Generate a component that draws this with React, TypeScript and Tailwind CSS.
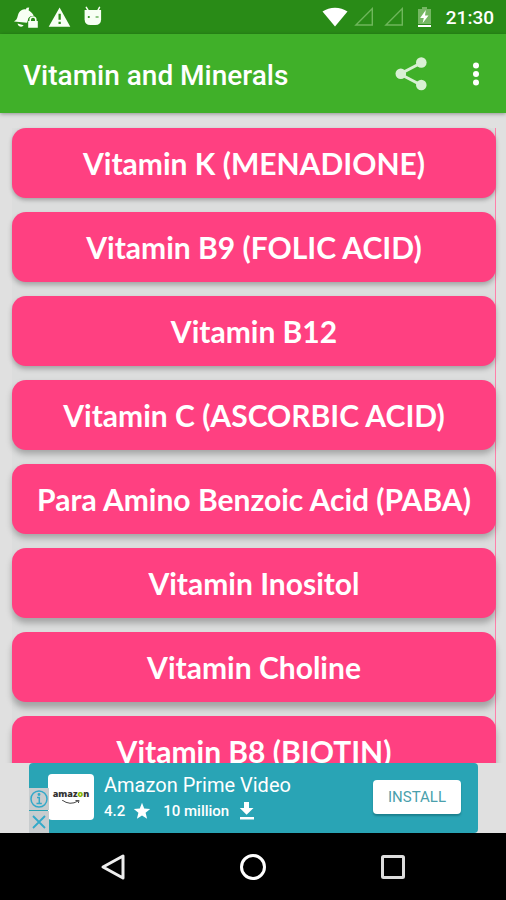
const vitamins = [
  { name: "Vitamin K (MENADIONE)", shadow: "shadow-[0_2px_4px_rgba(0,0,0,0.28)]" },
  { name: "Vitamin B9 (FOLIC ACID)", shadow: "shadow-[0_3px_5px_rgba(0,0,0,0.26)]" },
  { name: "Vitamin B12", shadow: "shadow-[0_3px_5px_rgba(0,0,0,0.26)]" },
  { name: "Vitamin C (ASCORBIC ACID)", shadow: "shadow-[0_4px_6px_rgba(0,0,0,0.26)]" },
  { name: "Para Amino Benzoic Acid (PABA)", shadow: "shadow-[0_4px_6px_rgba(0,0,0,0.26)]" },
  { name: "Vitamin Inositol", shadow: "shadow-[0_5px_6px_rgba(0,0,0,0.26)]" },
  { name: "Vitamin Choline", shadow: "shadow-[0_6px_6px_rgba(0,0,0,0.26)]" },
  { name: "Vitamin B8 (BIOTIN)", shadow: "shadow-[0_6px_6px_rgba(0,0,0,0.26)]" },
];

function SignalIcon() {
  return (
    <svg className="h-5 w-5" viewBox="0 0 20 20" fill="none" stroke="#6fb75c" strokeWidth="1.4">
      <path d="M18.300 1.600V18H1.900z" />
    </svg>
  );
}

function StatusBar() {
  return (
    <div className="flex h-[34px] shrink-0 items-center justify-between bg-[#298b17] pr-3 pl-3.5 text-white">
      <div className="flex items-center gap-2.5">
        <svg className="h-6 w-6" viewBox="0 0 24 24" fill="#f7fff4">
          <path d="M0 16.5 2.2 14.8C4.2 12.5 3.2 8 7.4 5.3 9 4.2 10.5 4.1 11.6 4.4L12.8 2.7 15.2 2.4 14.6 5.3C17.4 7.2 19.6 9.3 19.7 11.2 17 10.4 13.9 12 13.8 15.5L13 17.800z" />
          <path d="M3.5 18.5 9.6 20.3C8.5 22.6 4.3 22.2 3.5 18.5z" />
          <path d="M14.2 16h1.2v-1.2a3.6 3.6 0 0 1 7.2 0V16h1.2v6.7h-9.6zM17 16h4v-1.2a2 2 0 0 0-4 0z" fillRule="evenodd" />
        </svg>
        <svg className="h-6 w-6" viewBox="0 0 24 24" fill="#f7fff4">
          <path d="M11.6 2.5 22.3 21.8H.7zM10.5 8.7v6.1h2.3V8.7zm0 8v2.3h2.3v-2.3z" fillRule="evenodd" />
        </svg>
        <svg className="h-6 w-6" viewBox="0 0 24 24">
          <path d="M4.300 2.400 6.400 5.900M17.500 2.400 15.700 5.900" stroke="#f7fff4" strokeWidth="1.500" strokeLinecap="round" />
          <path d="M2.600 5h16.500v9.200q0 5.800-5.800 5.800H8.400q-5.800 0-5.800-5.800z" fill="#f7fff4" />
          <circle cx="6.800" cy="12" r="1.100" fill="#298b17" />
          <path d="M13.600 12h3" stroke="#298b17" strokeWidth="1" />
        </svg>
      </div>

      <div className="flex items-center">
        <svg className="mr-1.5 h-5 w-[26px]" viewBox="0 0 26 20" fill="#ffffff">
          <path d="M.5 4.500C7.500-.6 18.500-.6 25.500 4.500L13 19.500z" />
        </svg>
        <SignalIcon />
        <span className="w-2.5" />
        <SignalIcon />
        <svg className="mr-3 ml-2.5 h-[22px] w-5" viewBox="0 0 20 22">
          <path d="M4 3h4V1h5v2h4v15H4z" fill="#75b763" />
          <path d="M11.800 4 6.200 12h3.600L8.600 17.300 14.500 9.500H11z" fill="#ffffff" />
          <path d="M4 19h13v2H4z" fill="#ffffff" />
        </svg>
        <span className="pt-0.5 text-[19px] leading-6 font-medium">21:30</span>
      </div>
    </div>
  );
}

function AppBar() {
  return (
    <header className="z-10 flex h-[79px] shrink-0 items-center justify-between bg-[#40b029] pr-4 pl-[23px] text-white shadow-[0_1px_4px_rgba(0,0,0,0.35)]">
      <h1 className="pt-1 text-[28px] leading-8 font-medium">Vitamin and Minerals</h1>

      <div className="flex items-center gap-8">
        <button type="button" aria-label="Share">
          <svg className="h-9 w-9" viewBox="0 0 36 36" fill="#d9f0d4">
            <path d="M27 7 6 18l21 11" fill="none" stroke="#d9f0d4" strokeWidth="3" />
            <circle cx="27.300" cy="6.500" r="5.300" />
            <circle cx="6.800" cy="17.700" r="5.300" />
            <circle cx="27.300" cy="29" r="5.300" />
          </svg>
        </button>

        <button type="button" aria-label="More options">
          <svg className="h-7 w-7" viewBox="0 0 28 28" fill="#ffffff">
            <circle cx="14" cy="5.500" r="3" />
            <circle cx="14" cy="14" r="3" />
            <circle cx="14" cy="22.500" r="3" />
          </svg>
        </button>
      </div>
    </header>
  );
}

function AdBanner() {
  return (
    <aside className="relative mr-7 ml-[29px] flex h-[70px] shrink-0 items-center rounded-sm bg-[#29a4b5] pr-[17px] pb-0.5 pl-[19px] text-white">
      <div className="flex h-[46px] w-[46px] shrink-0 flex-col items-center justify-center rounded-sm bg-white">
        <span className="font-['Open_Sans',sans-serif] text-[9px] leading-3 font-extrabold text-[#333333]">
          amaz<span className="text-[#87b900]">o</span>n
        </span>
        <svg className="h-1.5 w-5" viewBox="0 0 20 6" fill="none" stroke="#444444" strokeWidth="1">
          <path d="M1 0Q9 6 17 1M14.500 .5 18 .3 17.400 3" />
        </svg>
      </div>

      <div className="ml-2.5 flex-1">
        <p className="text-xl leading-7">Amazon Prime Video</p>
        <div className="flex items-center text-[15px] leading-6 font-medium">
          <span>4.2</span>
          <svg className="ml-2 h-[18px] w-[18px]" viewBox="0 0 18 18" fill="#ffffff">
            <path d="m9 .8 2.200 5.700 6 .4-4.600 3.900 1.500 6L9 13.500l-5.100 3.300 1.500-6L.8 6.900l6-.4z" />
          </svg>
          <span className="ml-3">10 million</span>
          <svg className="ml-2.5 h-[18px] w-4" viewBox="0 0 16 18" fill="#ffffff">
            <path d="M5 0h5v6h4.500L7.600 12.800.8 6H5zM1 15h14v2.500H1z" />
          </svg>
        </div>
      </div>

      <button
        type="button"
        className="h-[34px] w-[88px] rounded-sm bg-white text-[15px] leading-5 text-[#4a9fac] shadow-[0_2px_2px_rgba(0,60,70,0.35)]"
      >
        INSTALL
      </button>

      <div className="absolute bottom-0 left-0 flex w-5 flex-col gap-px">
        <button type="button" aria-label="About this ad" className="h-[22px] bg-[#c8ccce]">
          <svg className="mx-auto h-5 w-5" viewBox="0 0 20 20" fill="none" stroke="#32a9c9" strokeWidth="1.500">
            <circle cx="10" cy="10" r="8" />
            <path d="M8 8.500h2.300v6M7.500 14.500h5.300" />
            <circle cx="10" cy="5.500" r=".7" fill="#32a9c9" />
          </svg>
        </button>
        <button type="button" aria-label="Close ad" className="h-[22px] bg-[#c8ccce]">
          <svg className="mx-auto h-5 w-5" viewBox="0 0 20 20" fill="none" stroke="#32a9c9" strokeWidth="1.800">
            <path d="m4 4 12 12M16 4 4 16" />
          </svg>
        </button>
      </div>
    </aside>
  );
}

function NavigationBar() {
  return (
    <nav className="flex h-[67px] shrink-0 items-center justify-center gap-[108px] bg-black">
      <button type="button" aria-label="Back">
        <svg className="h-8 w-8" viewBox="0 0 32 32" fill="none" stroke="#eeeeee" strokeWidth="3">
          <path d="M26 5v22L6 16z" strokeLinejoin="round" />
        </svg>
      </button>
      <button type="button" aria-label="Home">
        <svg className="h-8 w-8" viewBox="0 0 32 32" fill="none" stroke="#ffffff" strokeWidth="3">
          <circle cx="16" cy="16" r="11.500" />
        </svg>
      </button>
      <button type="button" aria-label="Recent apps">
        <svg className="h-8 w-8" viewBox="0 0 32 32" fill="none" stroke="#dddddd" strokeWidth="3">
          <rect x="5.500" y="5.500" width="21" height="21" rx="1" />
        </svg>
      </button>
    </nav>
  );
}

export default function App() {
  return (
    <div className="flex h-screen flex-col overflow-hidden bg-[#e0e0e0] font-['Roboto',sans-serif]">
      <StatusBar />
      <AppBar />

      <main className="min-h-0 flex-1 overflow-hidden pt-[15px] pr-2.5 pl-3">
        <ul className="flex flex-col gap-3.5 border-r border-r-[#ff7fa9] bg-[#dcdddd]">
          {vitamins.map((item) => (
            <li key={item.name} className="-mr-px">
              <button
                type="button"
                className={`h-[70px] w-full rounded-[14px] bg-[#ff4081] font-['Lato',sans-serif] text-[30px] leading-9 font-bold whitespace-nowrap text-white ${item.shadow}`}
              >
                {item.name}
              </button>
            </li>
          ))}
        </ul>
      </main>

      <AdBanner />
      <NavigationBar />
    </div>
  );
}
